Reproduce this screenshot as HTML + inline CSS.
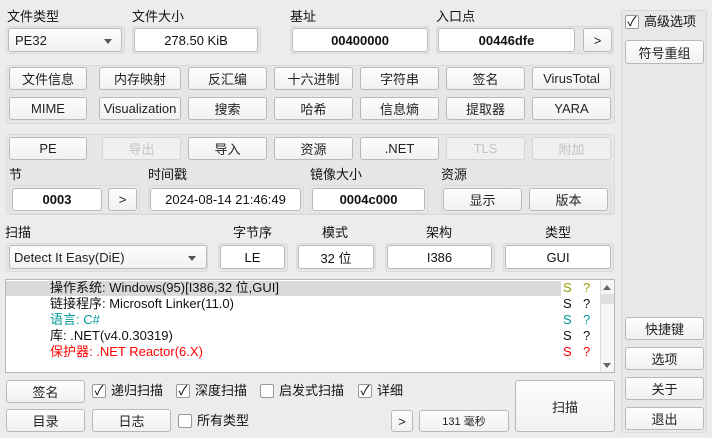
<!DOCTYPE html>
<html><head><meta charset="utf-8"><style>
*{box-sizing:border-box;margin:0;padding:0}
body{width:712px;height:438px;background:#ececec;position:relative;overflow:hidden;font-family:"Liberation Sans","Noto Sans CJK SC",sans-serif;font-size:13px;color:#111}
.a{position:absolute}
.l{position:absolute;font-size:13px;line-height:16px}
.b{position:absolute;background:linear-gradient(#fdfdfd,#f1f1f1);border:1px solid #b9b9b9;border-radius:3px;text-align:center;font-size:13px;display:flex;align-items:center;justify-content:center;color:#222}
.dis{color:#c4c4c4;border-color:#d4d4d4;background:#f0f0f0}
.e{position:absolute;background:#fff;border:1px solid #b8b8b8;border-radius:3px;display:flex;align-items:center;justify-content:center;font-size:13px}
.bold{font-weight:bold}
.g{position:absolute;border:1px solid #dadada;border-radius:3px;background:#e6e6e6}
.cb{position:absolute;width:14px;height:14px;background:#fff;border:1px solid #999;border-radius:2px;font-size:13px;line-height:12px;text-align:center;color:#000}
.row{position:absolute;left:50px;font-size:13px;line-height:16px;white-space:nowrap}
</style></head><body>
<div class="l" style="left:7px;top:9px">文件类型</div>
<div class="l" style="left:132px;top:9px">文件大小</div>
<div class="l" style="left:290px;top:9px">基址</div>
<div class="l" style="left:436px;top:9px">入口点</div>
<div class="g" style="left:6px;top:26px;width:119px;height:28px"></div>
<div class="b" style="left:8px;top:28px;width:114px;height:24px;justify-content:flex-start;padding-left:6px">PE32<span style="position:absolute;right:9px;top:10px;border:4px solid transparent;border-top:5px solid #555"></span></div>
<div class="g" style="left:132px;top:26px;width:129px;height:28px"></div>
<div class="e" style="left:134px;top:28px;width:124px;height:24px">278.50 KiB</div>
<div class="g" style="left:290px;top:26px;width:140px;height:28px"></div>
<div class="e bold" style="left:292px;top:28px;width:136px;height:24px">00400000</div>
<div class="g" style="left:436px;top:26px;width:178px;height:28px"></div>
<div class="e bold" style="left:438px;top:28px;width:137px;height:24px">00446dfe</div>
<div class="b" style="left:583px;top:28px;width:29px;height:24px">&gt;</div>

<div class="g" style="left:6px;top:65px;width:609px;height:59px"></div>
<div class="b" style="left:9px;top:67px;width:78px;height:23px">文件信息</div>
<div class="b" style="left:99px;top:67px;width:82px;height:23px">内存映射</div>
<div class="b" style="left:188px;top:67px;width:79px;height:23px">反汇编</div>
<div class="b" style="left:274px;top:67px;width:79px;height:23px">十六进制</div>
<div class="b" style="left:360px;top:67px;width:79px;height:23px">字符串</div>
<div class="b" style="left:446px;top:67px;width:79px;height:23px">签名</div>
<div class="b" style="left:532px;top:67px;width:79px;height:23px">VirusTotal</div>
<div class="b" style="left:9px;top:97px;width:78px;height:23px">MIME</div>
<div class="b" style="left:99px;top:97px;width:82px;height:23px">Visualization</div>
<div class="b" style="left:188px;top:97px;width:79px;height:23px">搜索</div>
<div class="b" style="left:274px;top:97px;width:79px;height:23px">哈希</div>
<div class="b" style="left:360px;top:97px;width:79px;height:23px">信息熵</div>
<div class="b" style="left:446px;top:97px;width:79px;height:23px">提取器</div>
<div class="b" style="left:532px;top:97px;width:79px;height:23px">YARA</div>

<div class="g" style="left:6px;top:134px;width:609px;height:81px"></div>
<div class="b" style="left:9px;top:137px;width:78px;height:23px">PE</div>
<div class="b dis" style="left:102px;top:137px;width:79px;height:23px">导出</div>
<div class="b" style="left:188px;top:137px;width:79px;height:23px">导入</div>
<div class="b" style="left:274px;top:137px;width:79px;height:23px">资源</div>
<div class="b" style="left:360px;top:137px;width:79px;height:23px">.NET</div>
<div class="b dis" style="left:446px;top:137px;width:79px;height:23px">TLS</div>
<div class="b dis" style="left:532px;top:137px;width:79px;height:23px">附加</div>
<div class="l" style="left:9px;top:167px">节</div>
<div class="l" style="left:148px;top:167px">时间戳</div>
<div class="l" style="left:310px;top:167px">镜像大小</div>
<div class="l" style="left:441px;top:167px">资源</div>
<div class="g" style="left:9px;top:185px;width:131px;height:29px;background:#e8e8e8"></div>
<div class="e bold" style="left:12px;top:188px;width:90px;height:23px">0003</div>
<div class="b" style="left:108px;top:188px;width:29px;height:23px">&gt;</div>
<div class="g" style="left:148px;top:185px;width:156px;height:29px;background:#e8e8e8"></div>
<div class="e" style="left:150px;top:188px;width:151px;height:23px">2024-08-14 21:46:49</div>
<div class="g" style="left:310px;top:185px;width:118px;height:29px;background:#e8e8e8"></div>
<div class="e bold" style="left:312px;top:188px;width:113px;height:23px">0004c000</div>
<div class="g" style="left:441px;top:185px;width:170px;height:29px;background:#e8e8e8"></div>
<div class="b" style="left:443px;top:188px;width:79px;height:23px">显示</div>
<div class="b" style="left:529px;top:188px;width:79px;height:23px">版本</div>

<div class="l" style="left:5px;top:225px">扫描</div>
<div class="l" style="left:233px;top:225px">字节序</div>
<div class="l" style="left:322px;top:225px">模式</div>
<div class="l" style="left:426px;top:225px">架构</div>
<div class="l" style="left:545px;top:225px">类型</div>
<div class="g" style="left:6px;top:243px;width:202px;height:29px"></div>
<div class="b" style="left:9px;top:245px;width:198px;height:24px;justify-content:flex-start;padding-left:4px">Detect It Easy(DiE)<span style="position:absolute;right:10px;top:10px;border:4px solid transparent;border-top:5px solid #555"></span></div>
<div class="g" style="left:218px;top:243px;width:70px;height:29px"></div>
<div class="e" style="left:220px;top:245px;width:65px;height:24px">LE</div>
<div class="g" style="left:296px;top:243px;width:80px;height:29px"></div>
<div class="e" style="left:298px;top:245px;width:76px;height:24px">32 位</div>
<div class="g" style="left:385px;top:243px;width:110px;height:29px"></div>
<div class="e" style="left:387px;top:245px;width:105px;height:24px">I386</div>
<div class="g" style="left:503px;top:243px;width:111px;height:29px"></div>
<div class="e" style="left:505px;top:245px;width:106px;height:24px">GUI</div>

<div class="a" style="left:5px;top:279px;width:610px;height:94px;background:#fff;border:1px solid #b8b8b8"></div>
<div class="a" style="left:6px;top:281px;width:555px;height:15px;background:#d9d9d9"></div>
<div class="row" style="top:280px">操作系统: Windows(95)[I386,32 位,GUI]</div>
<div class="row" style="top:296px">链接程序: Microsoft Linker(11.0)</div>
<div class="row" style="top:312px;color:#009999">语言: C#</div>
<div class="row" style="top:328px">库: .NET(v4.0.30319)</div>
<div class="row" style="top:344px;color:#f00">保护器: .NET Reactor(6.X)</div>
<div class="l" style="left:563px;top:280px;color:#999900">S</div><div class="l" style="left:583px;top:280px;color:#999900">?</div>
<div class="l" style="left:563px;top:296px">S</div><div class="l" style="left:583px;top:296px">?</div>
<div class="l" style="left:563px;top:312px;color:#009999">S</div><div class="l" style="left:583px;top:312px;color:#009999">?</div>
<div class="l" style="left:563px;top:328px">S</div><div class="l" style="left:583px;top:328px">?</div>
<div class="l" style="left:563px;top:344px;color:#f00">S</div><div class="l" style="left:583px;top:344px;color:#f00">?</div>
<div class="a" style="left:600px;top:280px;width:14px;height:92px;background:#f6f6f6;border-left:1px solid #ddd"></div>
<div class="a" style="left:601px;top:294px;width:13px;height:10px;background:#e0e0e0"></div>
<div class="a" style="left:603px;top:285px;border:4px solid transparent;border-bottom:5px solid #666;border-top:0"></div>
<div class="a" style="left:603px;top:363px;border:4px solid transparent;border-top:5px solid #666;border-bottom:0"></div>

<div class="b" style="left:6px;top:380px;width:79px;height:23px">签名</div>
<div class="cb" style="left:92px;top:384px">✓</div><div class="l" style="left:111px;top:383px">递归扫描</div>
<div class="cb" style="left:176px;top:384px">✓</div><div class="l" style="left:195px;top:383px">深度扫描</div>
<div class="cb" style="left:260px;top:384px"></div><div class="l" style="left:279px;top:383px">启发式扫描</div>
<div class="cb" style="left:358px;top:384px">✓</div><div class="l" style="left:377px;top:383px">详细</div>
<div class="b" style="left:6px;top:409px;width:79px;height:23px">目录</div>
<div class="b" style="left:92px;top:409px;width:79px;height:23px">日志</div>
<div class="cb" style="left:178px;top:414px"></div><div class="l" style="left:197px;top:413px">所有类型</div>
<div class="b" style="left:391px;top:410px;width:22px;height:22px">&gt;</div>
<div class="b" style="left:419px;top:410px;width:90px;height:22px;font-size:11px">131 毫秒</div>
<div class="b" style="left:515px;top:380px;width:100px;height:52px">扫描</div>

<div class="a" style="left:621px;top:10px;width:86px;height:423px;border:1px solid #d8d8d8;border-radius:3px;background:#e8e8e8"></div>
<div class="cb" style="left:625px;top:15px">✓</div><div class="l" style="left:644px;top:14px">高级选项</div>
<div class="b" style="left:625px;top:40px;width:79px;height:24px">符号重组</div>
<div class="b" style="left:625px;top:317px;width:79px;height:23px">快捷键</div>
<div class="b" style="left:625px;top:347px;width:79px;height:23px">选项</div>
<div class="b" style="left:625px;top:377px;width:79px;height:23px">关于</div>
<div class="b" style="left:625px;top:407px;width:79px;height:23px">退出</div>
</body></html>
